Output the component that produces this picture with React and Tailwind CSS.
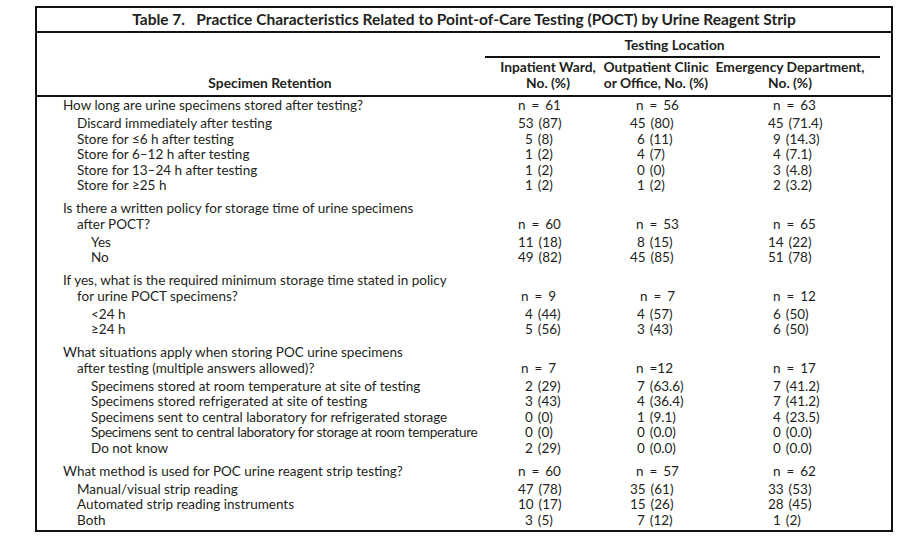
import React from "react";

const C1 = { 2: "pl-[33px]", 1: "pl-[40px]" };
const C2 = { 2: "pl-[30px]", 1: "pl-[37px]" };
const C3 = { 2: "pl-[56px]", 1: "pl-[61px]" };
const COLS = [C1, C2, C3];
const NPAD = [
  { 2: "pl-[33px]", 1: "pl-[36px]" },
  { 2: "pl-[36px]", 1: "pl-[40px]" },
  { 2: "pl-[61px]", 1: "pl-[61px]" },
];

const groups = [
  {
    q: ["How long are urine specimens stored after testing?"],
    n: ["n = 61", "n = 56", "n = 63"],
    level: 1,
    items: [
      ["Discard immediately after testing", "53 (87)", "45 (80)", "45 (71.4)"],
      ["Store for \u22646 h after testing", "5 (8)", "6 (11)", "9 (14.3)"],
      ["Store for 6\u201312 h after testing", "1 (2)", "4 (7)", "4 (7.1)"],
      ["Store for 13\u201324 h after testing", "1 (2)", "0 (0)", "3 (4.8)"],
      ["Store for \u226525 h", "1 (2)", "1 (2)", "2 (3.2)"],
    ],
  },
  {
    q: ["Is there a written policy for storage time of urine specimens", "after POCT?"],
    n: ["n = 60", "n = 53", "n = 65"],
    level: 2,
    items: [
      ["Yes", "11 (18)", "8 (15)", "14 (22)"],
      ["No", "49 (82)", "45 (85)", "51 (78)"],
    ],
  },
  {
    q: ["If yes, what is the required minimum storage time stated in policy", "for urine POCT specimens?"],
    n: ["n = 9", "n = 7", "n = 12"],
    level: 2,
    items: [
      ["<24 h", "4 (44)", "4 (57)", "6 (50)"],
      ["\u226524 h", "5 (56)", "3 (43)", "6 (50)"],
    ],
  },
  {
    q: ["What situations apply when storing POC urine specimens", "after testing (multiple answers allowed)?"],
    n: ["n = 7", "n =12", "n = 17"],
    level: 2,
    items: [
      ["Specimens stored at room temperature at site of testing", "2 (29)", "7 (63.6)", "7 (41.2)"],
      ["Specimens stored refrigerated at site of testing", "3 (43)", "4 (36.4)", "7 (41.2)"],
      ["Specimens sent to central laboratory for refrigerated storage", "0 (0)", "1 (9.1)", "4 (23.5)"],
      ["Specimens sent to central laboratory for storage at room temperature", "0 (0)", "0 (0.0)", "0 (0.0)", true],
      ["Do not know", "2 (29)", "0 (0.0)", "0 (0.0)"],
    ],
  },
  {
    q: ["What method is used for POC urine reagent strip testing?"],
    n: ["n = 60", "n = 57", "n = 62"],
    level: 1,
    items: [
      ["Manual/visual strip reading", "47 (78)", "35 (61)", "33 (53)"],
      ["Automated strip reading instruments", "10 (17)", "15 (26)", "28 (45)"],
      ["Both", "3 (5)", "7 (12)", "1 (2)"],
    ],
  },
];

const GRID = "grid grid-cols-[448px_115px_112px_179px]";

function digits(v) {
  const m = v.match(/^(\d+)/);
  return m && m[1].length >= 2 ? 2 : 1;
}
function ndigits(v) {
  const m = v.match(/(\d+)$/);
  return m && m[1].length >= 2 ? 2 : 1;
}

function Group({ g, first }) {
  return (
    <div className={first ? "pt-px" : "pt-[7.5px]"}>
      <div className={GRID + " items-end leading-[15.5px]"}>
        <div className="pl-[26px] whitespace-nowrap">
          {g.q.map((line, i) => (
            <div key={i} className={i > 0 ? "pl-[14px]" : ""}>
              {line}
            </div>
          ))}
        </div>
        {g.n.map((v, i) => (
          <div key={i} className={"whitespace-pre [word-spacing:2.5px] " + NPAD[i][ndigits(v)]}>
            {v}
          </div>
        ))}
      </div>
      <div className="pt-[2.5px]">
        {g.items.map((row, r) => (
          <div key={r} className={GRID + " leading-[15.5px]"}>
            <div
              className={
                (g.level === 1 ? "pl-[40px]" : "pl-[54px]") +
                " whitespace-nowrap" +
                (row[4] ? " tracking-[-0.34px]" : "")
              }
            >
              {row[0]}
            </div>
            {row.slice(1, 4).map((v, i) => (
              <div key={i} className={"whitespace-pre [word-spacing:1.5px] " + COLS[i][digits(v)]}>
                {v}
              </div>
            ))}
          </div>
        ))}
      </div>
    </div>
  );
}

export default function App() {
  return (
    <div className="w-[914px] h-[544px] bg-white pl-[35px] pt-[6px] font-['Lato','Noto_Sans',sans-serif] text-[13.5px] text-[#231f20]">
      <div className="w-[858px] h-[526px] border-2 border-[#111]">
        <div className="h-[25px] border-b-2 border-[#111] flex items-center justify-center font-bold text-[15.5px] whitespace-pre">
          {"Table 7.   Practice Characteristics Related to Point-of-Care Testing (POCT) by Urine Reagent Strip"}
        </div>
        <div className={GRID + " border-b-2 border-[#111] font-bold text-[13.8px]"}>
          <div className="row-span-2 flex items-end justify-center pl-[18px] pb-[4px] leading-[16px]">
            Specimen Retention
          </div>
          <div className="col-span-3 mr-[11px] h-[25px] border-b-2 border-[#111] flex items-center justify-center pr-[16px] pt-[1px]">
            Testing Location
          </div>
          <div className="pt-px pb-[4px] text-center leading-[16px] pl-[11px] whitespace-nowrap">
            <div>Inpatient Ward,</div>
            <div>No. (%)</div>
          </div>
          <div className="pt-px pb-[4px] text-center leading-[16px] whitespace-nowrap">
            <div>Outpatient Clinic</div>
            <div>or Office, No. (%)</div>
          </div>
          <div className="pt-px pb-[4px] text-center leading-[16px] pr-[23px] whitespace-nowrap">
            <div>Emergency Department,</div>
            <div>No. (%)</div>
          </div>
        </div>
        {groups.map((g, i) => (
          <Group key={i} g={g} first={i === 0} />
        ))}
      </div>
    </div>
  );
}
